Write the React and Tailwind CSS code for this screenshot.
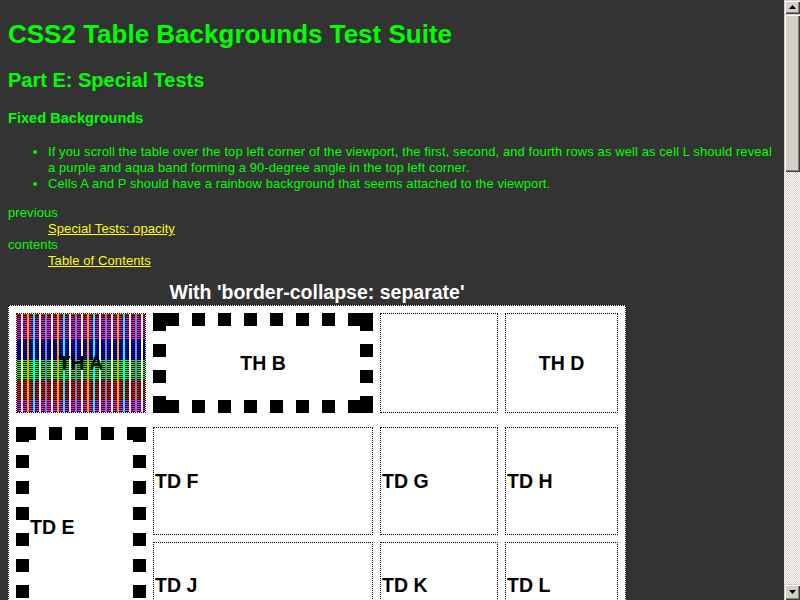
import React from 'react'

const SQ = 13

// runs of 13px squares along an edge, period 26, clipped to the edge
function squareRuns(len, phase) {
  const out = []
  for (let x = phase - 26; x < len; x += 26) {
    const a = Math.max(0, x)
    const b = Math.min(len, x + SQ)
    if (b > a) out.push([a, b - a])
  }
  return out
}

function SquareBorder({ w, h, hPhase, vPhase }) {
  const rects = []
  squareRuns(w, hPhase).forEach(([x, len], i) => {
    rects.push(<rect key={'t' + i} x={x} y={0} width={len} height={SQ} />)
    rects.push(<rect key={'b' + i} x={x} y={h - SQ} width={len} height={SQ} />)
  })
  squareRuns(h, vPhase).forEach(([y, len], i) => {
    rects.push(<rect key={'l' + i} x={0} y={y} width={SQ} height={len} />)
    rects.push(<rect key={'r' + i} x={w - SQ} y={y} width={SQ} height={len} />)
  })
  return (
    <svg className="absolute inset-0" width={w} height={h} fill="#000">
      {rects}
      <rect x={0} y={0} width={SQ} height={SQ} />
      <rect x={w - SQ} y={0} width={SQ} height={SQ} />
      <rect x={0} y={h - SQ} width={SQ} height={SQ} />
      <rect x={w - SQ} y={h - SQ} width={SQ} height={SQ} />
    </svg>
  )
}

function Rainbow() {
  const bands = [
    ['#ff0000', 0, 4],
    ['#ff00ff', 4, 21],
    ['#0000ff', 25, 20],
    ['#00ff00', 45, 20],
    ['#ff0000', 65, 20],
    ['#ff00ff', 85, 13],
  ]
  const stripes = []
  for (let y = 1; y < 98; y += 2) stripes.push(<rect key={y} x="0" y={y} width="128" height="1" fill="#000" />)
  const cols = ['#ffffff', '#ffa500', '#00ffff', '#ffffff', '#8080c0']
  const lines = []
  for (let i = 0, x = 4; x < 128; i++, x += 6) {
    lines.push(<rect key={x} x={x} y="0" width="2" height="98" fill={cols[i % 5]} />)
  }
  return (
    <svg className="absolute inset-0" width="128" height="98">
      {bands.map(([c, y, hh]) => <rect key={y} x="0" y={y} width="128" height={hh} fill={c} />)}
      {stripes}
      {lines}
    </svg>
  )
}

function Arrow({ down }) {
  return (
    <svg width="7" height="4" viewBox="0 0 7 4">
      <polygon points={down ? '0,0 7,0 3.5,4' : '3.5,0 7,4 0,4'} fill="#000" />
    </svg>
  )
}

const bevel = 'bg-[#d4d0c8] shadow-[inset_1px_1px_#d4d0c8,inset_2px_2px_#fff,inset_-1px_-1px_#404040,inset_-2px_-2px_#808080]'

function Scrollbar() {
  return (
    <div className="flex h-full w-4 flex-col">
      <div className={`flex h-[14px] items-center justify-center ${bevel}`}>
        <Arrow />
      </div>
      <div className={`h-[158px] ${bevel}`} />
      <div className="flex-1 bg-[repeating-conic-gradient(#d4d0c8_0_25%,#ffffff_0_50%)] bg-[length:2px_2px]" />
      <div className={`flex h-4 items-center justify-center ${bevel}`}>
        <Arrow down />
      </div>
    </div>
  )
}

const cellText = 'text-[19.5px] font-bold leading-[22px] text-black'
const dotted = 'border border-dotted border-black'

export default function App() {
  return (
    <div className="flex h-[600px] w-[800px] overflow-hidden bg-[#333333] font-['Liberation_Sans',Arial,sans-serif] text-[#00ff00]">
      <div className="h-full w-[784px] overflow-hidden px-2 pt-[19px]">
        <h1 className="text-[26px] font-bold leading-[30px]">CSS2 Table Backgrounds Test Suite</h1>
        <h2 className="mt-[20px] text-[20px] font-bold leading-[22px]">Part E: Special Tests</h2>
        <h3 className="mt-[19px] text-[14.6px] font-bold leading-[17px]">Fixed Backgrounds</h3>

        <ul className="mt-[17px] list-disc pl-10 text-[13px] leading-4 tracking-[0.09px]">
          <li>
            If you scroll the table over the top left corner of the viewport, the first, second, and fourth rows as well
            as cell L should reveal a purple and aqua band forming a 90-degree angle in the top left corner.
          </li>
          <li>Cells A and P should have a rainbow background that seems attached to the viewport.</li>
        </ul>

        <dl className="mt-[13px] text-[13px] leading-4 tracking-[0.1px]">
          <dt>previous</dt>
          <dd className="ml-10">
            <a href="#" className="text-[#ffff00] underline">Special Tests: opacity</a>
          </dd>
          <dt>contents</dt>
          <dd className="ml-10">
            <a href="#" className="text-[#ffff00] underline">Table of Contents</a>
          </dd>
        </dl>

        <div className="w-[618px]">
          <div className="mt-[12px] text-center text-[19.5px] font-bold leading-[22px] text-white">
            With 'border-collapse: separate'
          </div>
          <div className="mt-[2px] border border-dotted border-black bg-white p-[7px]">
            <div className="grid grid-cols-[130px_220px_118px_113px] gap-x-[7px] gap-y-[7px]">
              {/* row 1 */}
              <div className={`relative mb-[7px] flex h-[100px] items-center justify-center ${dotted}`}>
                <Rainbow />
                <span className={`relative ${cellText}`}>TH A</span>
              </div>
              <div className="relative mb-[7px] flex h-[100px] items-center justify-center">
                <SquareBorder w={220} h={100} hPhase={13} vPhase={5} />
                <span className={cellText}>TH B</span>
              </div>
              <div className={`mb-[7px] h-[100px] ${dotted}`} />
              <div className={`mb-[7px] flex h-[100px] items-center justify-center ${dotted}`}>
                <span className={cellText}>TH D</span>
              </div>

              {/* row 2 + 3 */}
              <div className="relative row-span-2 flex items-center pl-[14px]">
                <SquareBorder w={130} h={200} hPhase={7} vPhase={2} />
                <span className={cellText}>TD E</span>
              </div>
              <div className={`flex h-[108px] items-center pl-[1px] ${dotted}`}>
                <span className={cellText}>TD F</span>
              </div>
              <div className={`flex h-[108px] items-center pl-[1px] ${dotted}`}>
                <span className={cellText}>TD G</span>
              </div>
              <div className={`flex h-[108px] items-center pl-[1px] ${dotted}`}>
                <span className={cellText}>TD H</span>
              </div>

              <div className={`flex h-[85px] items-center pl-[1px] ${dotted}`}>
                <span className={cellText}>TD J</span>
              </div>
              <div className={`flex h-[85px] items-center pl-[1px] ${dotted}`}>
                <span className={cellText}>TD K</span>
              </div>
              <div className={`flex h-[85px] items-center pl-[1px] ${dotted}`}>
                <span className={cellText}>TD L</span>
              </div>
            </div>
          </div>
        </div>
      </div>
      <Scrollbar />
    </div>
  )
}
